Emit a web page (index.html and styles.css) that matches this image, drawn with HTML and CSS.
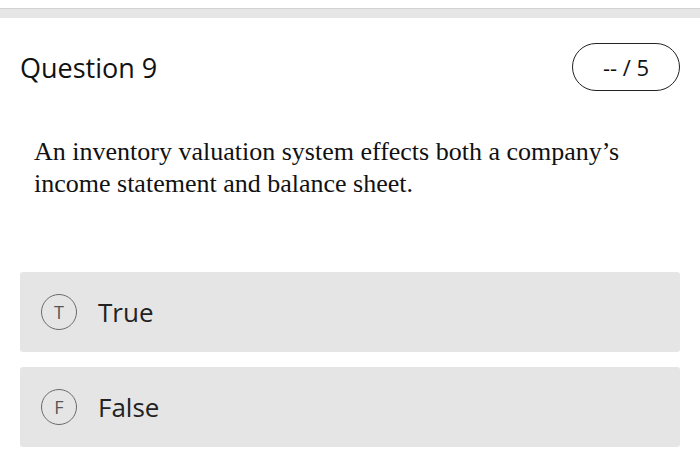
FILE: index.html
```html
<!DOCTYPE html>
<html>
<head>
<meta charset="utf-8">
<link rel="stylesheet" href="styles.css">
</head>
<body>
<div class="topbar"></div>
<div class="page">
  <div class="header">
    <h1 class="title">Question 9</h1>
    <div class="score">-- / 5</div>
  </div>
  <p class="question">An inventory valuation system effects both a company’s income statement and balance sheet.</p>
  <div class="options">
    <div class="option"><span class="badge">T</span><span class="label">True</span></div>
    <div class="option"><span class="badge">F</span><span class="label">False</span></div>
  </div>
</div>
</body>
</html>
```
FILE: styles.css
```css
html, body {
  margin: 0;
  padding: 0;
  background: #fff;
}
body {
  font-family: "Open Sans", "Noto Sans", sans-serif;
  color: #1a1a1a;
  width: 700px;
  height: 466px;
  overflow: hidden;
}
.topbar {
  margin-top: 8px;
  height: 10px;
  background: #e6e6e6;
  border-top: 1px solid #d2d2d2;
  box-sizing: border-box;
}
.page {
  padding: 0 20px;
}
.header {
  display: flex;
  align-items: center;
  justify-content: space-between;
  height: 98px;
}
.title {
  margin: 0;
  font-size: 27px;
  font-weight: 400;
  color: #111;
}
.score {
  width: 106px;
  height: 46px;
  border: 1.5px solid #222;
  border-radius: 24px;
  display: flex;
  align-items: center;
  justify-content: center;
  font-size: 22px;
  color: #111;
}
.question {
  margin: 20px 0 0 14px;
  font-family: "Liberation Serif", "Times New Roman", serif;
  font-size: 26px;
  line-height: 32px;
  color: #111;
  width: 620px;
}
.options {
  margin-top: 72px;
  display: flex;
  flex-direction: column;
  gap: 15px;
}
.option {
  height: 80px;
  background: #e5e5e5;
  border-radius: 3px;
  display: flex;
  align-items: center;
  padding-left: 21px;
}
.badge {
  width: 34px;
  height: 34px;
  border: 1.5px solid #6a6a6a;
  border-radius: 50%;
  display: flex;
  align-items: center;
  justify-content: center;
  font-size: 18px;
  color: #555;
}
.label {
  margin-left: 21px;
  font-size: 26px;
  color: #222;
}
```
